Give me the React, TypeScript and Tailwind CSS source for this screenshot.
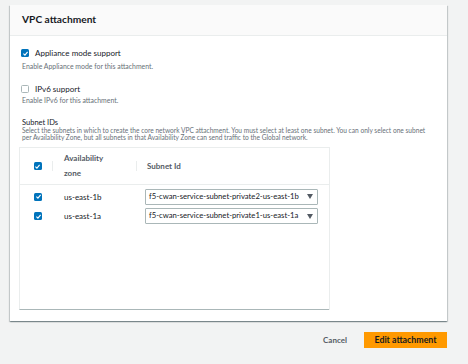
import React from "react";

function Check({ checked }: { checked: boolean }) {
  if (!checked) {
    return <span className="block w-[8px] h-[8px] rounded-[1.5px] border border-[#aab7b8] bg-white shrink-0" />;
  }
  return (
    <span className="flex items-center justify-center w-[8px] h-[8px] rounded-[1.5px] bg-[#0073bb] shrink-0">
      <svg viewBox="0 0 10 10" className="w-[7px] h-[7px]">
        <path d="M2 5.2 L4.2 7.3 L8 2.8" fill="none" stroke="white" strokeWidth="1.6" />
      </svg>
    </span>
  );
}

function Option({ checked, label, desc, gap }: { checked: boolean; label: string; desc: string; gap: string }) {
  return (
    <div>
      <div className="flex items-center gap-[6px] h-[12px] pl-[9px]">
        <Check checked={checked} />
        <span className="text-[8px] leading-[12px] text-[#16191f]">{label}</span>
      </div>
      <div className={`text-[6.9px] text-[#687078] pl-[10px] leading-[9px] ${gap}`}>{desc}</div>
    </div>
  );
}

const rows = [
  { zone: "us-east-1b", subnet: "f5-cwan-service-subnet-private2-us-east-1b" },
  { zone: "us-east-1a", subnet: "f5-cwan-service-subnet-private1-us-east-1a" },
];

export default function App() {
  return (
    <div className="w-[468px] h-[364px] bg-[#f2f3f3] pt-[5px] pl-[10px] pr-[21px] font-['Lato',sans-serif] overflow-hidden">
      <div className="w-[437px] h-[316px] bg-white shadow-[0_1px_1px_0_rgba(0,28,36,0.3),1px_1px_1px_0_rgba(0,28,36,0.15),-1px_1px_1px_0_rgba(0,28,36,0.15)]">
        <div className="h-[31px] bg-[#fafafa] border-b border-[#eaeded] flex items-center px-[12px]">
          <h2 className="text-[10.2px] font-bold text-[#16191f]">VPC attachment</h2>
        </div>
        <div className="pt-[11px] px-[2px]">
          <Option checked label="Appliance mode support" desc="Enable Appliance mode for this attachment." gap="mt-[2.5px]" />
          <div className="mt-[12.5px]">
            <Option checked={false} label="IPv6 support" desc="Enable IPv6 for this attachment." gap="mt-[1px]" />
          </div>
          <div className="mt-[12.5px] pl-[10px]">
            <div className="text-[7.5px] text-[#16191f] leading-[9px]">Subnet IDs</div>
            <div className="text-[6.6px] text-[#687078] leading-[7.5px] whitespace-nowrap">
              Select the subnets in which to create the core network VPC attachment. You must select at least one subnet. You can only select one subnet
              <br />
              per Availability Zone, but all subnets in that Availability Zone can send traffic to the Global network.
            </div>
          </div>
          <div className="ml-[7px] mt-[5.5px] w-[310px] h-[163px] border-t border-l border-[#eaeded] border-b-[1.5px] border-b-[#aab7b8] shadow-[1px_0_0_0_#eaeded]">
            <div className="flex items-center h-[37px] border-b border-[#eaeded]">
              <div className="w-[32px] flex justify-center pl-[3px]">
                <Check checked />
              </div>
              <span className="h-[10px] w-px bg-[#eaeded]" />
              <div className="w-[83px] pl-[11px] text-[8px] font-bold text-[#545b64] leading-[15px]">
                Availability
                <br />
                zone
              </div>
              <span className="h-[10px] w-px bg-[#eaeded]" />
              <div className="pl-[10px] text-[8px] font-bold text-[#545b64]">Subnet Id</div>
            </div>
            <div className="pt-[2px]">
              {rows.map((r) => (
                <div key={r.zone} className="flex items-center h-[19.5px]">
                  <div className="w-[33px] flex justify-center pl-[3px]">
                    <Check checked />
                  </div>
                  <div className="w-[92px] pl-[11px] text-[8px] text-[#16191f]">{r.zone}</div>
                  <div className="flex items-center justify-between w-[173px] h-[16px] border border-[#aab7b8] rounded-[1px] pl-[3px] pr-[4px]">
                    <span className="text-[7.7px] text-[#16191f] whitespace-nowrap">{r.subnet}</span>
                    <svg viewBox="0 0 10 8" className="w-[6px] h-[5px] shrink-0">
                      <path d="M0 0 H10 L5 8 Z" fill="#545b64" />
                    </svg>
                  </div>
                </div>
              ))}
            </div>
          </div>
        </div>
      </div>
      <div className="flex justify-end items-center mt-[11px] gap-[17px]">
        <button className="text-[8px] font-bold text-[#545b64]">Cancel</button>
        <button className="w-[83px] h-[16px] bg-[#ff9900] text-[8.8px] font-bold text-[#16191f]">Edit attachment</button>
      </div>
    </div>
  );
}
